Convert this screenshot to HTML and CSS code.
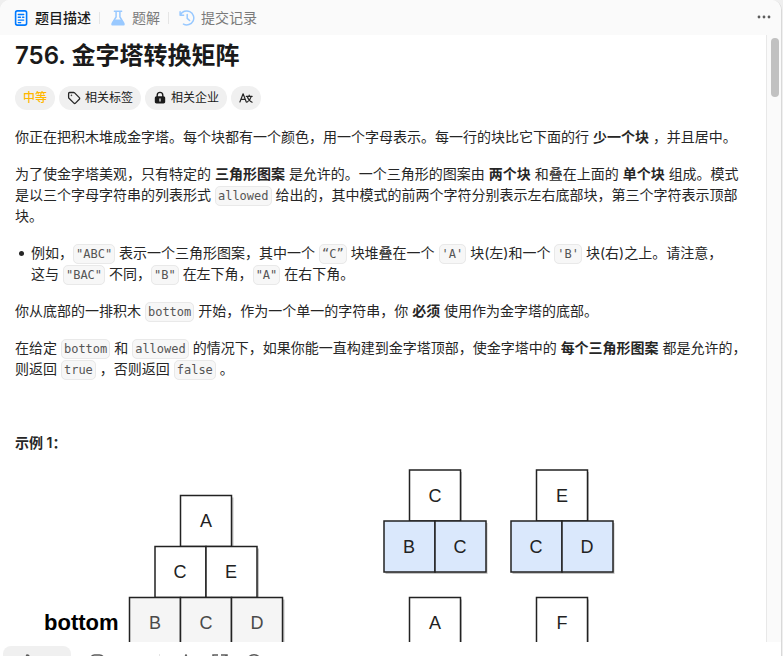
FILE: index.html
```html
<!DOCTYPE html>
<html lang="zh-CN">
<head>
<meta charset="utf-8">
<meta name="viewport" content="width=device-width, initial-scale=1">
<title>756. 金字塔转换矩阵</title>
<link rel="stylesheet" href="styles.css">
</head>
<body>
<div class="panel">
  <header class="tabs">
    <button class="tab active" type="button">
      <svg width="16" height="16" viewBox="0 0 16 16" fill="none" stroke="#007aff" stroke-width="1.6" stroke-linecap="round"><rect x="2.6" y=".9" width="11" height="14.2" rx="1.8"/><path d="M5.3 4.5h5.4M5.3 7.3h2.2M9.6 7.3h1.2M5.3 10.1h5.4M5.3 12.6h2.4" stroke-width="1.4"/></svg>
      题目描述
    </button>
    <span class="sep"></span>
    <button class="tab" type="button">
      <svg width="16" height="16" viewBox="0 0 16 16"><path d="M4.4 1.2h7.2M6.1 1.5V7L2.3 13.2M9.9 1.5V7l3.8 6.2" fill="none" stroke="#99c9ff" stroke-width="1.5" stroke-linecap="round"/><path d="M4.3 9.4h7.4l2.8 4.1c.6 1 0 2.1-1.1 2.1H2.6c-1.1 0-1.7-1.1-1.1-2.1z" fill="#99c9ff"/></svg>
      题解
    </button>
    <span class="sep"></span>
    <button class="tab" type="button">
      <svg width="16" height="16" viewBox="0 0 16 16" fill="none" stroke="#99c9ff" stroke-width="1.5" stroke-linecap="round" stroke-linejoin="round"><path d="M1.1 1.8v3.400h3.500M1.400 5A7 7 0 1 1 4.500 14.100"/><path d="M8.200 4.500v3.900l2.400 2.100"/></svg>
      提交记录
    </button>
    <button class="more" type="button" aria-label="更多">
      <svg width="16" height="16" viewBox="0 0 16 16" fill="#5c5c5c"><circle cx="3" cy="7" r="1.4"/><circle cx="8" cy="7" r="1.4"/><circle cx="13" cy="7" r="1.4"/></svg>
    </button>
  </header>

  <div class="body">
    <main class="content">
      <h1>756. 金字塔转换矩阵</h1>
      <div class="chips">
        <span class="chip level">中等</span>
        <button class="chip" type="button">
          <svg width="14" height="14" viewBox="0 0 14 14" fill="none" stroke="#262626" stroke-width="1.3" stroke-linejoin="round"><path d="M1.6 2.5c0-.6.4-1 1-1h4c.4 0 .7.1 1 .4l4.7 4.7c.5.5.5 1.1 0 1.6l-3.8 3.9c-.5.5-1.1.5-1.6 0L2 7.3c-.3-.3-.4-.6-.4-.9z"/><circle cx="4.4" cy="4.3" r=".5" fill="#262626" stroke-width=".5"/></svg>
          相关标签
        </button>
        <button class="chip" type="button">
          <svg width="14" height="14" viewBox="0 0 14 14"><path d="M4.2 6V4.2a2.8 2.8 0 0 1 5.6 0V6" fill="none" stroke="#1a1a1a" stroke-width="1.4"/><path d="M3.5 5.3h7c1 0 1.7.7 1.7 1.7v3.8c0 1-.7 1.7-1.7 1.7h-7c-1 0-1.7-.7-1.7-1.7V7c0-1 .7-1.7 1.7-1.7z" fill="#1a1a1a"/><path d="M7 8v2" stroke="#f0f0f0" stroke-width="1.3" stroke-linecap="round"/></svg>
          相关企业
        </button>
        <button class="chip" type="button" aria-label="翻译">
          <svg width="14" height="14" viewBox="0 0 14 14" fill="none" stroke="#262626" stroke-width="1.2" stroke-linecap="round" stroke-linejoin="round"><path d="M.9 11 4.1 2.8 7.3 11M2 8.4h4.2"/><path d="M7.3 5.4h5.8M10.2 4.2v1.2M8.3 5.6c.7 2.5 2.3 4.5 4.8 5.6M12.2 5.6c-.7 2.5-2.2 4.5-4.3 5.6"/></svg>
        </button>
      </div>

      <div class="prose">
        <p>你正在把积木堆成金字塔。每个块都有一个颜色，用一个字母表示。每一行的块比它下面的行 <strong>少一个块</strong> ，并且居中。</p>
        <p>为了使金字塔美观，只有特定的 <strong>三角形图案</strong> 是允许的。一个三角形的图案由 <strong>两个块</strong> 和叠在上面的 <strong>单个块</strong> 组成。模式是以三个字母字符串的列表形式 <code>allowed</code> 给出的，其中模式的前两个字符分别表示左右底部块，第三个字符表示顶部块。</p>
        <ul>
          <li>例如，<code>"ABC"</code> 表示一个三角形图案，其中一个 <code>“C”</code> 块堆叠在一个 <code>'A'</code> 块(左)和一个 <code>'B'</code> 块(右)之上。请注意，<br>这与 <code>"BAC"</code> 不同，<code>"B"</code> 在左下角，<code>"A"</code> 在右下角。</li>
        </ul>
        <p>你从底部的一排积木 <code>bottom</code> 开始，作为一个单一的字符串，你 <strong>必须</strong> 使用作为金字塔的底部。</p>
        <p>在给定 <code>bottom</code> 和 <code>allowed</code> 的情况下，如果你能一直构建到金字塔顶部，使金字塔中的 <strong>每个三角形图案</strong> 都是允许的，则返回 <code>true</code> ，否则返回 <code>false</code> 。</p>
        <p>&nbsp;</p>
        <p><strong>示例 1：</strong></p>
        <svg class="diagram" width="600" height="180" viewBox="0 0 600 180" role="img" aria-label="金字塔示例">
          <g class="shadow">
            <rect x="167.5" y="28.5" width="51" height="51"/><rect x="142" y="79.5" width="102" height="51"/><rect x="116.5" y="130.5" width="153" height="51"/>
            <rect x="396" y="3" width="51" height="51"/><rect x="370.5" y="54" width="102" height="51"/><rect x="396" y="130.5" width="51" height="51"/>
            <rect x="523" y="3" width="51" height="51"/><rect x="497.5" y="54" width="102" height="51"/><rect x="523" y="130.5" width="51" height="51"/>
          </g>
          <g class="box">
            <rect x="165.5" y="26.5" width="51" height="51"/>
            <rect x="140" y="77.5" width="51" height="51"/><rect x="191" y="77.5" width="51" height="51"/>
            <rect x="394.5" y="1" width="51" height="51"/><rect x="521.5" y="1" width="51" height="51"/>
            <rect x="394.5" y="128.5" width="51" height="60"/><rect x="521.5" y="128.5" width="51" height="60"/>
          </g>
          <g class="box base">
            <rect x="114.5" y="128.5" width="51" height="60"/><rect x="165.5" y="128.5" width="51" height="60"/><rect x="216.5" y="128.5" width="51" height="60"/>
          </g>
          <g class="box blue">
            <rect x="369" y="52" width="51" height="51"/><rect x="420" y="52" width="51" height="51"/>
            <rect x="496" y="52" width="51" height="51"/><rect x="547" y="52" width="51" height="51"/>
          </g>
          <g class="letter">
            <text x="191" y="58">A</text><text x="165" y="109">C</text><text x="216" y="109">E</text>
            <text x="420" y="33">C</text><text x="394" y="84">B</text><text x="445" y="84">C</text>
            <text x="547" y="33">E</text><text x="521" y="84">C</text><text x="572" y="84">D</text>
            <text x="420" y="160">A</text><text x="547" y="160">F</text>
          </g>
          <g class="letter dim"><text x="140" y="160">B</text><text x="191" y="160">C</text><text x="242" y="160">D</text></g>
          <text class="caption" x="29" y="161">bottom</text>
        </svg>
      </div>
    </main>
    <div class="track"><div class="thumb"></div></div>
  </div>

  <footer class="actions">
    <button class="vote" type="button" aria-label="点赞"><svg width="16" height="16" viewBox="0 0 16 16" fill="none" stroke="#5c5c5c" stroke-width="1.5"><path d="M5 7 8 .9c1.5 0 2 .9 1.8 2L9.3 6H13c1 0 1.6.8 1.3 1.8l-1.2 5.4c-.2.8-.8 1.3-1.6 1.3H5zM5 7H2v7.5h3"/></svg></button>
    <button type="button" aria-label="评论"><svg width="16" height="16" viewBox="0 0 16 16" fill="none" stroke="#5c5c5c" stroke-width="1.5"><path d="M5.5 1h5C13.5 1 15 3.500 15 7s-2 6-4.500 6H8l-3 2v-2C2.500 13 1 10 1 7s1.500-6 4.500-6z"/></svg></button>
    <span class="divider"></span>
    <button type="button" aria-label="收藏"><svg width="16" height="16" viewBox="0 0 16 16" fill="none" stroke="#5c5c5c" stroke-width="1.5"><path d="m8 1 2.100 4.400 4.900.7-3.500 3.400.8 4.800L8 12l-4.300 2.300.8-4.800L1 6.100l4.900-.7z"/></svg></button>
    <button type="button" aria-label="分享"><svg width="16" height="16" viewBox="0 0 16 16" fill="none" stroke="#5c5c5c" stroke-width="1.5"><path d="M6 1H1v14h13v-5M9 1h6v6M15 1 7 9"/></svg></button>
    <button type="button" aria-label="帮助"><svg width="16" height="16" viewBox="0 0 16 16" fill="none" stroke="#5c5c5c" stroke-width="1.5"><circle cx="8" cy="8" r="7.200"/><path d="M6 6.200a2 2 0 1 1 2 2.300v1M8 11v1"/></svg></button>
  </footer>
</div>
</body>
</html>
```
FILE: styles.css
```css
* { box-sizing: border-box; }

body {
  margin: 0;
  height: 100vh;
  overflow: hidden;
  padding-right: 1px;
  background: #efefef;
  color: #262626;
  font-family: Inter, "Noto Sans CJK SC", sans-serif;
  font-size: 14px;
  line-height: 21px;
}

button {
  margin: 0;
  padding: 0;
  border: 0;
  background: none;
  color: inherit;
  font: inherit;
}

svg { display: block; flex: none; }

.panel {
  display: flex;
  flex-direction: column;
  height: 100%;
  overflow: hidden;
  border-right: 1px solid #d9d9d9;
  border-radius: 10px 10px 0 0;
  background: #fff;
}

.tabs {
  display: flex;
  align-items: center;
  flex: none;
  height: 35px;
  padding: 0 9px 0 13px;
  background: #fafafa;
}

.tab {
  display: flex;
  align-items: center;
  gap: 6px;
  color: #7a7a7a;
}

.tab.active { color: #1a1a1a; font-weight: 500; }

.sep {
  width: 1px;
  height: 12px;
  margin: 0 10px 0 8px;
  background: #e5e5e5;
}

.more { margin-left: auto; }

.body {
  display: flex;
  flex: 1;
  min-height: 0;
}

.content {
  flex: 1;
  min-width: 0;
  overflow: hidden;
  padding: 5px 16px 0 15px;
}

h1 {
  margin: 0;
  color: #1a1a1a;
  font-size: 24px;
  font-weight: 600;
  line-height: 32px;
}

.chips {
  display: flex;
  gap: 4px;
  margin: 14px 0 16px;
}

.chip {
  display: flex;
  align-items: center;
  gap: 4px;
  height: 24px;
  padding: 0 8px;
  border-radius: 12px;
  background: #f0f0f0;
  color: #1a1a1a;
  font-size: 12px;
  line-height: 16px;
}

.level { color: #ffb700; font-weight: 500; }

.prose p, .prose ul { margin: 0 0 16px; }

.prose ul {
  padding-left: 16px;
  list-style: none;
}

.prose li { position: relative; }

.prose li::before {
  content: "";
  position: absolute;
  left: -12px;
  top: 9px;
  width: 5px;
  height: 5px;
  border-radius: 50%;
  background: #262626;
}

.prose strong { font-weight: 600; }

code {
  padding: 2px;
  border: 1px solid #e9e9e9;
  border-radius: 5px;
  background: #f7f7f7;
  color: #555;
  font-family: "DejaVu Sans Mono", monospace;
  font-size: 12px;
  line-height: 14px;
}

.shadow { fill: #c4c4c4; }
.box { fill: #fff; stroke: #222; stroke-width: 1.5; }
.base { fill: #f5f5f5; }
.blue { fill: #dae8fc; }

.letter {
  fill: #222;
  font-family: "Liberation Sans", sans-serif;
  font-size: 18px;
  text-anchor: middle;
}

.dim { fill: #4a4a4a; }

.caption {
  fill: #000;
  font-family: "Liberation Sans", sans-serif;
  font-size: 22px;
  font-weight: 700;
}

.track {
  flex: none;
  width: 15px;
  padding: 3px 2px 0 4px;
  border-left: 1px solid #e8e8e8;
  background: #fafafa;
}

.thumb {
  height: 59px;
  border-radius: 4px;
  background: #c1c1c1;
}

.actions {
  display: flex;
  align-items: flex-start;
  gap: 18px;
  flex: none;
  height: 14px;
  overflow: hidden;
  padding: 4px 3px 0;
}

.actions button { padding: 8px 0; }

.actions .vote {
  width: 68px;
  padding: 8px 16px;
  border-radius: 8px;
  background: #f0f0f0;
}

.divider {
  width: 1px;
  height: 16px;
  margin: 8px 0 0 36px;
  background: #e5e5e5;
}
```
